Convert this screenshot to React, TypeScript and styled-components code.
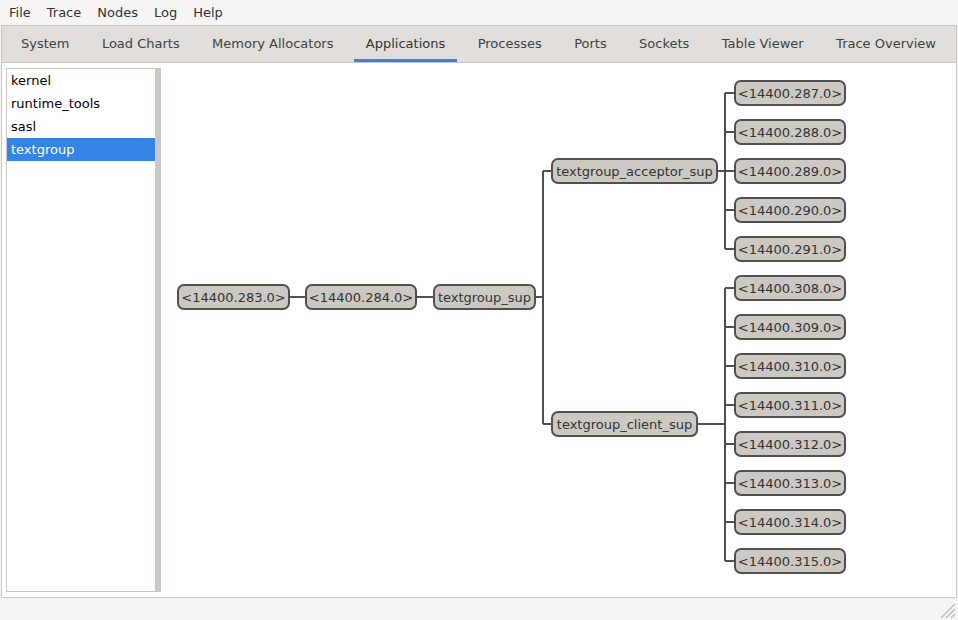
import styled, { createGlobalStyle } from 'styled-components';

const GlobalStyle = createGlobalStyle`
  html, body {
    margin: 0;
    padding: 0;
    background: #f6f5f4;
  }
  body {
    font-family: "DejaVu Sans", "Noto Sans", sans-serif;
    font-size: 13px;
    color: #2e3436;
  }
`;

const menus = ['File', 'Trace', 'Nodes', 'Log', 'Help'];
const tabs = [
  'System',
  'Load Charts',
  'Memory Allocators',
  'Applications',
  'Processes',
  'Ports',
  'Sockets',
  'Table Viewer',
  'Trace Overview',
];
const apps = ['kernel', 'runtime_tools', 'sasl', 'textgroup'];

type TreeNode = { label: string; x: number; y: number; w: number };

// coordinates inside the canvas (top-left of the white drawing area)
const pidTop = (i: number) => 17 + i * 39;
const acceptorPids = [287, 288, 289, 290, 291];
const clientPids = [308, 309, 310, 311, 312, 313, 314, 315];

const nodes: TreeNode[] = [
  { label: '<14400.283.0>', x: 16, y: 221, w: 113 },
  { label: '<14400.284.0>', x: 144, y: 221, w: 112 },
  { label: 'textgroup_sup', x: 272, y: 221, w: 103 },
  { label: 'textgroup_acceptor_sup', x: 390, y: 95, w: 167 },
  { label: 'textgroup_client_sup', x: 390, y: 348, w: 147 },
  ...acceptorPids.map((p, i) => ({ label: `<14400.${p}.0>`, x: 573, y: pidTop(i), w: 112 })),
  ...clientPids.map((p, i) => ({ label: `<14400.${p}.0>`, x: 573, y: pidTop(i + 5), w: 112 })),
];

const mid = (i: number) => pidTop(i) + 13;

const Connectors = () => {
  const segs: string[] = [
    'M129 234H144',
    'M256 234H272',
    'M375 234H382',
    'M382 108V361',
    'M382 108H390',
    'M382 361H390',
    'M557 108H564',
    `M564 ${mid(0)}V${mid(4)}`,
    'M537 361H564',
    `M564 ${mid(5)}V${mid(12)}`,
  ];
  for (let i = 0; i < 13; i++) segs.push(`M564 ${mid(i)}H573`);
  return (
    <Wires width="796" height="534">
      <path d={segs.join(' ')} stroke="#505050" strokeWidth="2" fill="none" />
    </Wires>
  );
};

const Grip = () => (
  <svg width="18" height="18" viewBox="0 0 18 18">
    <path d="M17 3L3 17M17 8L8 17M17 13L13 17" stroke="#b8b4ae" strokeWidth="1.2" />
  </svg>
);

const App = () => {
  return (
    <>
      <GlobalStyle />
      <Window>
        <MenuBar>
          {menus.map((m) => (
            <MenuItem key={m}>{m}</MenuItem>
          ))}
        </MenuBar>
        <Notebook>
          <TabBar>
            {tabs.map((t) => (
              <Tab key={t} $active={t === 'Applications'}>
                {t}
              </Tab>
            ))}
          </TabBar>
          <Content>
            <ListWrap>
              <List>
                {apps.map((a) => (
                  <ListRow key={a} $selected={a === 'textgroup'}>
                    {a}
                  </ListRow>
                ))}
              </List>
              <ScrollStrip />
            </ListWrap>
            <Canvas>
              <Connectors />
              {nodes.map((n) => (
                <Node key={n.label} style={{ left: n.x, top: n.y, width: n.w }}>
                  {n.label}
                </Node>
              ))}
            </Canvas>
          </Content>
        </Notebook>
        <StatusBar>
          <Grip />
        </StatusBar>
      </Window>
    </>
  );
};

export default App;

const Window = styled.div`
  width: 958px;
  height: 620px;
  display: flex;
  flex-direction: column;
  background: #f6f5f4;
  overflow: hidden;
`;

const MenuBar = styled.div`
  height: 25px;
  display: flex;
  align-items: center;
  padding-left: 1px;
  box-sizing: border-box;
`;

const MenuItem = styled.div`
  padding: 0 8px;
  line-height: 24px;
  color: #2e3436;
`;

const Notebook = styled.div`
  height: 573px;
  margin: 0 1px;
  border: 1px solid #cdc7c2;
  box-sizing: border-box;
  display: flex;
  flex-direction: column;
`;

const TabBar = styled.div`
  height: 37px;
  display: flex;
  gap: 8.4px;
  padding-left: 7px;
  background: #e1dedb;
  border-bottom: 1px solid #cdc7c2;
  box-sizing: border-box;
`;

const Tab = styled.div<{ $active?: boolean }>`
  height: 36px;
  padding: 0 12px 2px;
  box-sizing: border-box;
  display: flex;
  align-items: center;
  color: ${({ $active }) => ($active ? '#2e3436' : '#3d4244')};
  box-shadow: ${({ $active }) => ($active ? 'inset 0 -3px 0 #3584e4' : 'none')};
`;

const Content = styled.div`
  flex: 1;
  display: flex;
  background: #ffffff;
`;

const ListWrap = styled.div`
  display: flex;
  margin: 5px 0 5px 4px;
`;

const List = styled.div`
  width: 148px;
  border: 1px solid #cdc7c2;
  border-right: none;
  background: #ffffff;
`;

const ListRow = styled.div<{ $selected?: boolean }>`
  height: 23px;
  line-height: 23px;
  padding-left: 4px;
  color: ${({ $selected }) => ($selected ? '#ffffff' : '#000000')};
  background: ${({ $selected }) => ($selected ? '#3584e4' : 'transparent')};
`;

const ScrollStrip = styled.div`
  width: 6px;
  background: #cdc7c2;
`;

const Canvas = styled.div`
  flex: 1;
  position: relative;
`;

const Wires = styled.svg`
  position: absolute;
  left: 0;
  top: 0;
`;

const Node = styled.div`
  position: absolute;
  height: 26px;
  box-sizing: border-box;
  border: 2px solid #505050;
  border-radius: 7px;
  background: #cdc8c2;
  color: #2e3436;
  display: flex;
  align-items: center;
  justify-content: center;
  white-space: nowrap;
`;

const StatusBar = styled.div`
  flex: 1;
  display: flex;
  justify-content: flex-end;
  align-items: flex-end;
  padding: 0 2px 1px 0;
`;
